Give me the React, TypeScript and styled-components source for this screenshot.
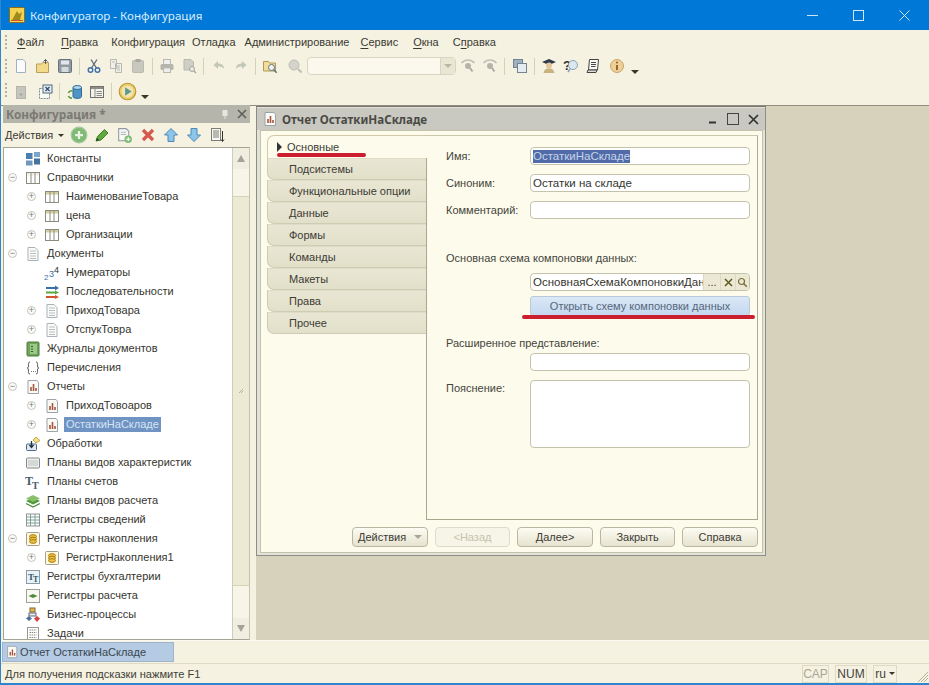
import React from "react";
import styled, { createGlobalStyle } from "styled-components";

const Global = createGlobalStyle`
  html, body { margin: 0; padding: 0; background: #f5f2e2; }
  body { font-family: "Liberation Sans", "Noto Sans", sans-serif; font-size: 11px; color: #333; overflow: hidden; }
`;

const Frame = styled.div`
  width: 929px; height: 685px; display: flex; flex-direction: column; box-sizing: border-box;
  background: #f5f2e2; border-left: 1px solid #2f86cf; border-bottom: 2px solid #2f86cf; overflow: hidden; position: relative;
`;
const TitleBar = styled.div`
  height: 30px; flex: none; background: #0078d7; margin-left: -1px; display: flex; align-items: center; padding: 0 2px 0 9px; gap: 5px; color: #d8ecfa; font-family: "Noto Sans", sans-serif; font-size: 11.6px;
`;
const TitleText = styled.span`flex: 1;`;
const WinCtl = styled.div`width: 46px; height: 30px; margin-left: -5px; display: flex; align-items: center; justify-content: center;`;
const MenuBar = styled.div`height: 24px; flex: none; display: flex; align-items: center; padding-left: 16px; position: relative;`;
const MenuItem = styled.span<{ $ml: number }>`font-size: 11px; color: #3a3a32; margin-left: ${p => p.$ml}px; u { text-underline-offset: 2px; }`;
const Gripper = styled.i`
  position: absolute; left: 4px; top: 5px; width: 2px; height: 15px;
  background: repeating-linear-gradient(to bottom, #b5b29c 0 2px, transparent 2px 4px);
`;
const ToolRow = styled.div<{ $h: number }>`height: ${p => p.$h}px; flex: none; display: flex; align-items: center; padding-left: 9px; position: relative;`;
const ToolBtn = styled.div<{ $ml?: number }>`width: 22px; height: 22px; flex: none; display: flex; align-items: center; justify-content: center; margin-left: ${p => p.$ml ?? 0}px;`;
const Sep = styled.i`width: 1px; height: 17px; flex: none; background: #d4d1bb; margin: 0 3px;`;
const Combo = styled.div`
  width: 149px; height: 18px; margin-left: 1px; margin-right: 1px; flex: none; box-sizing: border-box; border: 1px solid #d8d5c2; border-radius: 4px; background: #fbf9ee;
  display: flex; justify-content: flex-end; 
`;
const ComboArrow = styled.div`width: 14px; background: #e9e6d3; border-left: 1px solid #d8d5c2; display: flex; align-items: center; justify-content: center;`;
const Tri = styled.i<{ $c?: string }>`width: 0; height: 0; border-left: 4px solid transparent; border-right: 4px solid transparent; border-top: 4px solid ${p => p.$c ?? "#3a3628"};`;
const DropTri = styled(Tri)`margin: 11px 0 0 3px;`;

const Main = styled.div`flex: 1; min-height: 0; display: flex; border-top: 1px solid #8f8d80;`;
const Left = styled.div`width: 249px; flex: none; padding-left: 2px; box-sizing: border-box; display: flex; flex-direction: column; margin-top: -1px;`;
const PanelHead = styled.div`height: 18px; flex: none; background: #b6b5ac; display: flex; align-items: center; padding-left: 3px; font-family: "Noto Sans", sans-serif; font-weight: 700; color: #7a7a72; font-size: 11.8px; position: relative;`;
const PanelTitle = styled.span`flex: 1;`;
const PanelCtl = styled.div`width: 17px; display: flex; justify-content: center; align-items: center;`;
const PanelTools = styled.div`height: 24px; flex: none; display: flex; align-items: center; padding-left: 2px; background: #f5f2e2;`;
const ActionsLabel = styled.span`font-size: 11px; color: #3a3a32; width: 53px;`;
const ActionsTri = styled(Tri)`border-width: 3px 3px 0; margin-right: 3px; flex: none;`;
const PanelBtn = styled.div`width: 23px; height: 22px; flex: none; display: flex; align-items: center; justify-content: center;`;
const TreeWrap = styled.div`flex: 1; min-height: 0; display: flex; background: #fff; border: 1px solid #a5a394; border-right-color: #c5c3b2; box-sizing: border-box; overflow: hidden;`;
const TreeList = styled.div`flex: 1; min-width: 0; overflow: hidden; padding-top: 1px;`;
const Row = styled.div<{ $lvl: number }>`height: 19px; display: flex; align-items: center; position: relative; padding-left: ${p => (p.$lvl ? 40 : 21)}px;`;
const Toggle = styled.span<{ $lvl: number }>`
  position: absolute; left: ${p => (p.$lvl ? 23 : 4)}px; top: 5px; width: 9px; height: 9px; border: 1px solid #c4c4bc; border-radius: 50%; box-sizing: border-box; background: #fbfbf8;
  display: flex; align-items: center; justify-content: center; color: #777; font-size: 9px; line-height: 1;
`;
const IconBox = styled.span`width: 16px; height: 16px; flex: none; display: flex; align-items: center; justify-content: center;`;
const TaskIcon = styled.span`width: 14px; height: 14px; flex: none; display: flex; align-items: center; justify-content: center;`;
const RowText = styled.span<{ $sel?: boolean }>`
  margin-left: ${p => (p.$sel ? 4 : 6)}px; padding: 1px ${p => (p.$sel ? 2 : 0)}px 2px; font-size: 11px; white-space: nowrap; color: ${p => (p.$sel ? "#d5e4f3" : "#35352e")}; background: ${p => (p.$sel ? "#6f93c3" : "transparent")};
`;
const Scroll = styled.div`width: 16px; flex: none; display: flex; flex-direction: column; background: #f7f5e8; border-left: 1px solid #cfccb8;`;
const ScrollBtn = styled.div`height: 21px; flex: none; display: flex; align-items: center; justify-content: center; background: #f0eee0;`;
const UpTri = styled.i`width: 0; height: 0; border-left: 4px solid transparent; border-right: 4px solid transparent; border-bottom: 7px solid #a4a396;`;
const DownTri = styled.i`width: 0; height: 0; border-left: 4px solid transparent; border-right: 4px solid transparent; border-top: 7px solid #a4a396;`;
const ScrollTrack = styled.div<{ $h: number }>`height: ${p => p.$h}px; flex: none;`;
const Thumb = styled.div`flex: 1; background: #ecead2; border-top: 1px solid #d5d3bc; border-bottom: 1px solid #d5d3bc; display: flex; align-items: center; justify-content: center;`;
const Splitter = styled.div`width: 6px; flex: none; background: #f5f2e2;`;

const Desk = styled.div`flex: 1; background: #d6d2bc; min-width: 0;`;
const Win = styled.div`
  width: 510px; height: 450px; box-sizing: border-box; background: #e3e2d7; border: 1px solid #8d8c86; border-top-color: #77766e; padding: 1px 2px 2px 3px; display: flex; flex-direction: column;
`;
const WinHead = styled.div`height: 22px; flex: none; background: #c9c9c2; margin: 0 -2px 0 -3px; display: flex; align-items: center; padding: 0 2px 0 5px; gap: 4px;`;
const WinTitle = styled.span`flex: 1; font-family: "Noto Sans", sans-serif; font-weight: 700; font-size: 11.6px; color: #4a4a44;`;
const WinBtn = styled.div`width: 20px; margin-left: -4px; display: flex; justify-content: center; align-items: center;`;
const Body = styled.div`flex: 1; min-height: 0; background: #fdfbec; border: 1px solid #c4c2ab; display: flex; flex-direction: column; padding: 4px 4px 0 6px; position: relative;`;
const Top = styled.div`display: flex; height: 385px; flex: none;`;
const Tabs = styled.div`width: 160px; box-sizing: border-box; flex: none; display: flex; flex-direction: column; border-right: 1px solid #aaa78f;`;
const ActiveTab = styled.div`height: 23px; flex: none; box-sizing: border-box; border: 1px solid #d3c9a8; border-right: 0; border-bottom: 0; border-radius: 7px 0 0 0; background: #fdfbec; margin-right: -1px; display: flex; align-items: center; padding: 0 0 0 9px; gap: 5px; font-size: 11px; color: #3c3c36;`;
const ActiveMark = styled.i`width: 0; height: 0; border-top: 5px solid transparent; border-bottom: 5px solid transparent; border-left: 5px solid #333;`;
const Tab = styled.div`height: 22px; flex: none; box-sizing: border-box; border: 1px solid #cfccb4; border-right: 0; border-top-color: #dedbc6; border-radius: 0 0 0 7px; background: linear-gradient(#e9e6d3, #e2dfc9); display: flex; align-items: center; padding-left: 21px; font-size: 11px; color: #3c3c36;`;
const Pane = styled.div`flex: 1; min-width: 0; box-sizing: border-box; border-top: 1px solid #c9c6ae; border-right: 1px solid #ada99a; border-bottom: 1px solid #aaa78f; padding: 0 7px 0 19px;`;
const PaneRow = styled.div<{ $mt: number }>`display: flex; align-items: center; margin-top: ${p => p.$mt}px; min-height: 18px;`;
const AlignRow = styled(PaneRow)`align-items: flex-start;`;
const Label = styled.span`width: 84px; flex: none; font-size: 11px; color: #44443c; white-space: nowrap;`;
const TopLabel = styled(Label)`padding-top: 2px;`;
const Field = styled.div<{ $h?: number }>`flex: 1; min-width: 0; height: ${p => p.$h ?? 18}px; box-sizing: border-box; border: 1px solid #c5c2ab; border-radius: 4px; background: #fff; padding-left: 2px; display: flex; align-items: center; font-size: 11.5px; color: #35352e; overflow: hidden; white-space: nowrap;`;
const Selected = styled.span`background: #516ba8; color: #c7d3ea; line-height: 13px;`;
const FieldText = styled.span`flex: 1; overflow: hidden;`;
const FieldBtn = styled.div<{ $w: number }>`width: ${p => p.$w}px; height: 100%; flex: none; box-sizing: border-box; background: #ebe8d3; border-left: 1px solid #dcdac6; display: flex; align-items: center; justify-content: center; color: #444; font-size: 11px;`;
const Wide = styled.div`margin: 5px 0 0 84px; height: 20px; box-sizing: border-box; border: 1px solid #b9c9dd; border-radius: 3px; background: linear-gradient(#dbe8f6, #c4d8ef); display: flex; align-items: center; justify-content: center; font-size: 11px; color: #55677a;`;
const Bottom = styled.div`display: flex; padding: 7px 0 0 85px; gap: 6.75px;`;
const Btn = styled.div<{ $off?: boolean }>`width: 76px; height: 20px; box-sizing: border-box; border: 1px solid ${p => (p.$off ? "#dedbca" : "#b9b6a2")}; border-radius: 4px; background: ${p => (p.$off ? "#f7f5e7" : "linear-gradient(#fdfcf3, #e6e3cf)")}; display: flex; align-items: center; justify-content: center; font-size: 11px; color: ${p => (p.$off ? "#c6c3ae" : "#3c3c36")};`;
const BtnActions = styled(Btn)`justify-content: space-between; padding: 0 5px;`;
const Underline = styled.i<{ $l: number; $t: number; $w: number }>`position: absolute; left: ${p => p.$l}px; top: ${p => p.$t}px; width: ${p => p.$w}px; height: 4px; border-radius: 2px; background: #cb1f30; z-index: 2;`;

const TaskBar = styled.div`height: 24px; flex: none; border-top: 1px solid #fbfaf2; box-sizing: border-box; padding: 1px 0 0 1px; border-bottom: 1px solid #dedbc6;`;
const Task = styled.div`width: 172px; height: 20px; box-sizing: border-box; background: #b4cbe3; border: 1px solid #a0b4c9; display: flex; align-items: center; padding-left: 2px; gap: 1px; font-size: 11px; color: #3c4650;`;
const Status = styled.div`height: 19px; flex: none; display: flex; align-items: center; padding-left: 4px; font-size: 11.1px; color: #3f3f38; gap: 6px;`;
const StatusText = styled.span`flex: 1;`;
const Ind = styled.div<{ $w: number; $off?: boolean }>`width: ${p => p.$w}px; height: 18px; box-sizing: border-box; border: 1px solid #dcd9c5; display: flex; align-items: center; justify-content: center; gap: 3px; font-size: 12px; color: ${p => (p.$off ? "#a9a795" : "#44443c")};`;
const StatusEnd = styled.div`width: 26px; height: 18px; flex: none; display: flex; align-items: flex-end; justify-content: flex-end;`;
const SmallTri = styled(Tri)`border-width: 3px 3px 0;`;

const S = ({ children, size = 16 }: { children: React.ReactNode; size?: number }) => (
  <svg width={size} height={size} viewBox="0 0 16 16" fill="none">{children}</svg>
);
const doc = <path d="M3 1.5h7l3 3v10H3z" fill="#fbfbf6" stroke="#a9b2bd" />;
const lines = <path d="M5 5h6M5 7.5h6M5 10h6M5 12.5h6" stroke="#b7bec6" />;
const Grid3 = ({ head = "#d6cf9f" }: { head?: string }) => (
  <S><rect x="1.5" y="2.5" width="13" height="11" fill="#fff" stroke="#8b8b80" /><rect x="2" y="3" width="12" height="2.5" fill={head} /><path d="M6 3v10M10 3v10" stroke="#8b8b80" /></S>
);
const DocI = () => <S>{doc}{lines}</S>;
const Report = ({ size = 16 }: { size?: number }) => <S size={size}><path d="M3 1.5h9l1.5 2v11H3z" fill="#fbfbf6" stroke="#9aa2ab" /><path d="M6 12V8M8.5 12V5M11 12V9" stroke="#a8523f" strokeWidth="1.6" /></S>;
const Coins = () => <S><rect x="1.5" y="1.5" width="13" height="13" rx="1" fill="#fff8df" stroke="#a3a08d" /><ellipse cx="8" cy="5.5" rx="3.5" ry="1.8" fill="#f0c23c" stroke="#a47c12" /><ellipse cx="8" cy="8" rx="3.5" ry="1.8" fill="#f0c23c" stroke="#a47c12" /><ellipse cx="8" cy="10.5" rx="3.5" ry="1.8" fill="#f0c23c" stroke="#a47c12" /></S>;

const treeIcons: Record<string, React.ReactNode> = {
  constants: <S><rect x="1" y="2" width="6.5" height="6" fill="#4f7fb0" /><rect x="9" y="1" width="6" height="5" fill="#7ea7cc" /><rect x="1" y="9.5" width="6.5" height="5" fill="#6f97bd" /><rect x="9" y="7.5" width="6" height="6" fill="#46729f" /></S>,
  refs: <Grid3 head="#eeeee6" />,
  ref: <Grid3 />,
  docs: <DocI />,
  numerators: <S><text x="0" y="15" fontSize="8" fill="#3570a8" fontFamily="Liberation Sans">2</text><text x="5" y="12" fontSize="9" fill="#3570a8" fontFamily="Liberation Sans">3</text><text x="10" y="8" fontSize="9" fill="#333" fontFamily="Liberation Sans">4</text></S>,
  seq: <S><path d="M2 4h10" stroke="#3c6ea8" strokeWidth="2" /><path d="M11 1.5 15 4l-4 2.5z" fill="#3c6ea8" /><path d="M2 8.5h10" stroke="#5aa83c" strokeWidth="2" /><path d="M11 6.5 15 8.5l-4 2z" fill="#5aa83c" /><path d="M2 13h10" stroke="#d2552e" strokeWidth="2" /><path d="M11 11 15 13l-4 2z" fill="#d2552e" /></S>,
  journal: <S><rect x="2" y="1" width="12" height="14" rx="1" fill="#6fa45a" stroke="#4c7d3c" /><rect x="5" y="3" width="7" height="10" fill="#9bc788" /><path d="M6 5.5h2M6 8h2M6 10.5h2" stroke="#2f5f22" /></S>,
  enum: <S><path d="M5 2C3 2 3.5 4 3.5 6S2 8 2 8s1.500 0 1.500 2S3 14 5 14M11 2c2 0 1.500 2 1.500 4S14 8 14 8s-1.500 0-1.500 2 .5 4-1.500 4" stroke="#5a5a55" /><path d="M6 11.500h.8M8 11.500h.8M10 11.500h.8" stroke="#5a5a55" /></S>,
  report: <Report />,
  proc: <S><path d="M11 1 15 4.500 11 7 8 4z" fill="#f2dc8a" stroke="#c2a848" /><rect x="1.500" y="8" width="10" height="6.500" rx="1" fill="#dfe8f0" stroke="#4a6a8c" /><path d="M6.500 5v6M4.500 9l2 2.500 2-2.500" stroke="#234" strokeWidth="1.300" /></S>,
  chartTypes: <S><rect x="1.500" y="3" width="13" height="10" rx="1" fill="#eef0ee" stroke="#858a8a" /><path d="M3.500 6h9M3.500 8h9M3.500 10h9" stroke="#8a8f8f" strokeDasharray="1 1" /></S>,
  accounts: <S><text x="0" y="11" fontSize="12" fill="#45606f" fontFamily="Liberation Serif" fontWeight="700">T</text><text x="7" y="15" fontSize="10" fill="#45606f" fontFamily="Liberation Serif" fontWeight="700">T</text></S>,
  calcTypes: <S><path d="M1 8 8 4.500 15 8 8 11.500z" fill="#4e9a3a" /><path d="M1 5.500 8 2l7 3.500L8 9z" fill="#8ac06a" /><path d="M1 10.500 8 14l7-3.500" stroke="#4e8a3a" strokeWidth="1.300" /></S>,
  info: <S><rect x="1.500" y="2" width="13" height="12" fill="#fff" stroke="#8b9493" /><path d="M1.500 5h13M1.500 8h13M1.500 11h13M5.500 2v12M10 2v12" stroke="#7ea09a" /></S>,
  accum: <Coins />,
  buh: <S><rect x="1.500" y="1.500" width="13" height="13" fill="#e8f2f7" stroke="#8b9ba3" /><text x="3" y="11" fontSize="9" fill="#30566e" fontFamily="Liberation Serif" fontWeight="700">T</text><text x="8" y="13" fontSize="8" fill="#30566e" fontFamily="Liberation Serif" fontWeight="700">T</text></S>,
  calc: <S><rect x="1.500" y="1.500" width="13" height="13" fill="#f8f8f3" stroke="#a0a096" /><path d="M3.500 8 8 6 12.500 8 8 10z" fill="#4e8a3a" /></S>,
  bp: <S><rect x="5" y="1" width="5" height="4" fill="#e6b64c" stroke="#7d6a30" /><rect x="4" y="6" width="7" height="3" fill="#e8ecef" stroke="#667" /><path d="M1 11.500 4 9l3 2.500L4 14z" fill="#4d6fa0" /><path d="M9 11.500 12 9l3 2.500L12 15z" fill="#d64040" /></S>,
  task: <S><rect x="2.500" y="1.500" width="11" height="13" fill="#fff" stroke="#9a9a90" /><path d="M4.500 4h7M4.500 6.500h7M4.500 9h7M4.500 11.500h7" stroke="#8a8a80" strokeDasharray="1.500 .7" /></S>,
};

const tree: [string, number, string, string?][] = [
  ["Константы", 0, "constants"],
  ["Справочники", 0, "refs", "-"],
  ["НаименованиеТовара", 1, "ref", "+"],
  ["цена", 1, "ref", "+"],
  ["Организации", 1, "ref", "+"],
  ["Документы", 0, "docs", "-"],
  ["Нумераторы", 1, "numerators"],
  ["Последовательности", 1, "seq"],
  ["ПриходТовара", 1, "docs", "+"],
  ["ОтспукТовра", 1, "docs", "+"],
  ["Журналы документов", 0, "journal"],
  ["Перечисления", 0, "enum"],
  ["Отчеты", 0, "report", "-"],
  ["ПриходТовоаров", 1, "report", "+"],
  ["ОстаткиНаСкладе", 1, "report", "+"],
  ["Обработки", 0, "proc"],
  ["Планы видов характеристик", 0, "chartTypes"],
  ["Планы счетов", 0, "accounts"],
  ["Планы видов расчета", 0, "calcTypes"],
  ["Регистры сведений", 0, "info"],
  ["Регистры накопления", 0, "accum", "-"],
  ["РегистрНакопления1", 1, "accum", "+"],
  ["Регистры бухгалтерии", 0, "buh"],
  ["Регистры расчета", 0, "calc"],
  ["Бизнес-процессы", 0, "bp"],
  ["Задачи", 0, "task"],
];

const gray = "#b9b9b0";
const I = {
  newDoc: <S><path d="M3.500 1.500h6.500l2.500 2.500v10.500h-9z" fill="#fbfbfb" stroke="#9fb2c4" /></S>,
  open: <S><path d="M1.500 6h5l1-1.500h6v10h-12z" fill="#f3d98a" stroke="#b6a05c" /><path d="M10.500 6V1.500M8.500 3.500l2-2 2 2" stroke="#4d5a63" /></S>,
  save: <S><rect x="1.500" y="1.500" width="13" height="13" rx="1" fill="#8f9aa3" stroke="#69747c" /><rect x="4" y="2.500" width="8" height="4" fill="#e4e7ea" /><rect x="4.500" y="9" width="7" height="5" fill="#d6dadd" /></S>,
  cut: <S><path d="M5 1.500 10.500 10M11 1.500 5.500 10" stroke="#5e6a74" strokeWidth="1.300" /><circle cx="4.500" cy="12" r="2.300" stroke="#3f6ea8" strokeWidth="1.400" /><circle cx="11.500" cy="12" r="2.300" stroke="#3f6ea8" strokeWidth="1.400" /></S>,
  copy: <S><path d="M2.500 1.500h6v9h-6zM7.500 5.500h6v9h-6z" fill="#f1f1ec" stroke={gray} /><path d="M4 4h3M9 8h3M9 10h3M9 12h3" stroke={gray} /></S>,
  paste: <S><rect x="2.500" y="2.500" width="11" height="12" rx="1" fill="#c9c8bf" stroke={gray} /><rect x="5.500" y="1" width="5" height="3" fill="#aaa99f" /></S>,
  print: <S><rect x="4.500" y="1.500" width="7" height="5" fill="#eee" stroke={gray} /><rect x="1.500" y="6" width="13" height="6" rx="1.500" fill="#b5b5ac" /><rect x="4.500" y="10" width="7" height="4.500" fill="#eee" stroke={gray} /></S>,
  preview: <S><path d="M3 1.500h7l2.500 2.500v8H3z" fill="#cfcfc6" stroke={gray} /><circle cx="11" cy="11" r="2.500" fill="#e8e8e0" stroke="#a5a59b" /><path d="M13 13l2 2" stroke="#a5a59b" strokeWidth="1.500" /></S>,
  undo: <S><path d="M2.500 7 7 3v2.500c3.500 0 6 1.500 6 5.500-1.500-2-3-2.500-6-2.500V11z" fill="#c3c7b8" /></S>,
  redo: <S><path d="M13.500 7 9 3v2.500C5.500 5.500 3 7 3 11c1.500-2 3-2.500 6-2.500V11z" fill="#c3c7b8" /></S>,
  findFolder: <S><path d="M1.500 3.500h5l1 1.500h6v8h-12z" fill="#f3dc98" stroke="#ab9a5c" /><circle cx="9.500" cy="9.500" r="3" fill="#eef3f6" stroke="#66727c" /><path d="M11.700 11.700l3 3" stroke="#66727c" strokeWidth="1.500" /></S>,
  search: <S><circle cx="7" cy="7" r="5" fill="#d4d4cc" stroke="#bdbdb3" /><path d="M11 11l3.500 3.500" stroke="#bdbdb3" strokeWidth="2" /></S>,
  navA: <S><path d="M1.500 5C5 1 11 1 14.500 5" stroke="#c0c0b6" strokeWidth="1.500" /><circle cx="8" cy="8" r="3" fill="#b4b4aa" /><path d="M10 10l2.500 3.500" stroke="#a8a89e" strokeWidth="1.800" /></S>,
  windows: <S><rect x="1.500" y="1.500" width="9" height="8" fill="#9fb0c0" stroke="#73848f" /><rect x="5.500" y="5.500" width="9" height="9" fill="#e5ebf1" stroke="#73848f" /></S>,
  student: <S><path d="M8 1 15 4 8 7 1 4z" fill="#2a3a4a" /><circle cx="8" cy="7.500" r="3" fill="#e8c49a" /><path d="M2.500 15c1-4 3-4.500 5.500-4.500s4.500.5 5.500 4.500z" fill="#c9b27c" /></S>,
  help: <S><text x="0" y="12" fontSize="13" fontWeight="700" fill="#333" fontFamily="Liberation Sans">?</text><circle cx="10" cy="7" r="4.500" fill="#dbe8f0" stroke="#8aa0b0" /><path d="M7 11l-2 3" stroke="#8aa0b0" strokeWidth="1.500" /></S>,
  book: <S><path d="M4.500 1.500h9l-1 10.500h-9z" fill="#fafaf5" stroke="#444" /><path d="M2 14.500h9l1-2.500H3z" fill="#ddd" stroke="#444" /><path d="M6 4.500h5M6 6.500h5M6 8.500h4.500" stroke="#444" /></S>,
  info: <S><circle cx="8" cy="8" r="6.500" fill="#eecf9a" stroke="#c9a566" /><circle cx="8" cy="4.500" r="1" fill="#8a5c20" /><path d="M8 7v5" stroke="#8a5c20" strokeWidth="1.800" /></S>,
  gridDoc: <S><rect x="3.500" y="2.500" width="9" height="12" fill="#c5c5bc" stroke="#b5b5ac" /><path d="M8 9v3M6.500 10.500h3" stroke="#a5a59c" /></S>,
  xDoc: <S><path d="M2.500 4.500h10v10h-10z" fill="#fafaf5" stroke="#7c8a94" strokeDasharray="2 1" /><rect x="6" y="1" width="9" height="8" fill="#e4ecf4" stroke="#53697d" /><path d="M8.500 3l4 4M12.500 3l-4 4" stroke="#2f4c68" strokeWidth="1.300" /></S>,
  db: <S><path d="M6 3.500v9c0 2.500 8.500 2.500 8.500 0v-9" fill="#4f94c6" stroke="#2b6a98" /><ellipse cx="10.250" cy="3.500" rx="4.250" ry="2" fill="#b2d6ec" stroke="#2b6a98" /><path d="M1.500 9a3 3 0 0 1 4-2M5 14a3 3 0 0 1-3.500-2" stroke="#4e9a3a" strokeWidth="1.600" /></S>,
  table: <S><rect x="1.500" y="2.500" width="13" height="11" fill="#f2f2ec" stroke="#70706a" /><rect x="2" y="3" width="12" height="2" fill="#8e8e86" /><path d="M6 5v8M7.500 7.500h5.500M7.500 9.500h5.500M7.500 11.500h5.500" stroke="#8e8e86" /></S>,
  play: <S size={19}><circle cx="8" cy="8" r="7" fill="#eccd6a" stroke="#b79433" strokeWidth=".9" /><circle cx="8" cy="8" r="5" fill="#f4e5b0" /><path d="M6 4.500v7l5.500-3.500z" fill="#5c9a92" /></S>,
  plus: <S size={18}><circle cx="8" cy="8" r="7" fill="#7fbb74" stroke="#a8c9a2" /><path d="M8 4.500v7M4.500 8h7" stroke="#e8f3e3" strokeWidth="2" /></S>,
  pencil: <S><path d="M2 14l1.500-4.500 7-7 3.500 3.500-7 7z" fill="#5da93c" stroke="#3e7d26" /><path d="M2 14l3-1-2-2z" fill="#333" /></S>,
  addDoc: <S size={17}><path d="M2.500 1.500h7l2.500 2.500v9h-9.500z" fill="#f8f8f3" stroke="#8e9aa5" /><path d="M4.500 5h5M4.500 7h5" stroke="#aeb6bd" /><circle cx="11.500" cy="11.500" r="3.500" fill="#7fbb74" /><path d="M11.500 9.500v4M9.500 11.500h4" stroke="#fff" /></S>,
  del: <S><path d="M3 3l10 10M13 3 3 13" stroke="#d8564b" strokeWidth="3.200" /></S>,
  up: <S><path d="M8 1.500 14.500 8H11v6.500H5V8H1.500z" fill="#8cc4ea" stroke="#4f88b4" /></S>,
  down: <S><path d="M8 14.500 14.500 8H11V1.500H5V8H1.500z" fill="#8cc4ea" stroke="#4f88b4" /></S>,
  list: <S><rect x="2.500" y="1.500" width="9" height="12" fill="#f8f8f3" stroke="#7c7c74" /><path d="M4 4h6M4 6h6M4 8h6M4 10h6" stroke="#7c7c74" /><path d="M13.500 4v10M12 12.500l1.500 2 1.500-2" stroke="#333" /></S>,
};

const Menu = ["Файл|Ф", "Правка|П", "Конфигурация", "Отладка", "Администрирование", "Сервис|С", "Окна|О", "Справка|п"];
const menuGaps = [0, 17, 13, 7, 9, 11, 15, 14];

const MenuLabel = ({ v }: { v: string }) => {
  const [t, u] = v.split("|");
  if (!u) return <>{t}</>;
  const i = t.indexOf(u);
  return <>{t.slice(0, i)}<u>{u}</u>{t.slice(i + 1)}</>;
};

const TB = ({ children, ml }: { children: React.ReactNode; ml?: number }) => <ToolBtn $ml={ml}>{children}</ToolBtn>;

export default function App() {
  return (
    <Frame>
      <Global />
      <TitleBar>
        <svg width="16" height="16" viewBox="0 0 16 16"><rect x=".5" y=".5" width="15" height="15" rx="1" fill="#f2d24f" stroke="#8a6f16" /><path d="M3 13l5-9 2 3 3-2-2 8z" fill="#a08a20" /><path d="M2 13h12v1H2z" fill="#c53" /></svg>
        <TitleText>Конфигуратор - Конфигурация</TitleText>
        <WinCtl><svg width="11" height="11"><path d="M0 5.500h11" stroke="#cfe6f8" /></svg></WinCtl>
        <WinCtl><svg width="11" height="11"><rect x=".5" y=".5" width="10" height="10" fill="none" stroke="#cfe6f8" /></svg></WinCtl>
        <WinCtl><svg width="11" height="11"><path d="M.5.500l10 10M10.500.500l-10 10" stroke="#cfe6f8" /></svg></WinCtl>
      </TitleBar>
      <MenuBar>
        <Gripper />
        {Menu.map((m, i) => <MenuItem key={m} $ml={menuGaps[i]}><MenuLabel v={m} /></MenuItem>)}
      </MenuBar>
      <ToolRow $h={24}>
        <Gripper />
        <TB>{I.newDoc}</TB><TB>{I.open}</TB><TB>{I.save}</TB><Sep />
        <TB>{I.cut}</TB><TB>{I.copy}</TB><TB>{I.paste}</TB><Sep />
        <TB>{I.print}</TB><TB>{I.preview}</TB><Sep />
        <TB ml={1}>{I.undo}</TB><TB>{I.redo}</TB><Sep />
        <TB>{I.findFolder}</TB><TB ml={3}>{I.search}</TB>
        <Combo><ComboArrow><Tri $c="#b9b7a6" /></ComboArrow></Combo>
        <TB>{I.navA}</TB><TB>{I.navA}</TB><Sep />
        <TB ml={1}>{I.windows}</TB><Sep />
        <TB>{I.student}</TB><TB>{I.help}</TB><TB>{I.book}</TB><TB ml={2}>{I.info}</TB>
        <DropTri />
      </ToolRow>
      <ToolRow $h={27}>
        <Gripper />
        <TB>{I.gridDoc}</TB><TB ml={2}>{I.xDoc}</TB><Sep />
        <TB ml={1}>{I.db}</TB><TB>{I.table}</TB><Sep />
        <TB ml={1}>{I.play}</TB>
        <DropTri />
      </ToolRow>
      <Main>
        <Left>
          <PanelHead>
            <PanelTitle>Конфигурация *</PanelTitle>
            <PanelCtl><svg width="8" height="10"><rect x="1.500" y="1" width="5" height="6" fill="#e6e6e0" /><path d="M4 7v3" stroke="#e6e6e0" /></svg></PanelCtl>
            <PanelCtl><svg width="10" height="10"><path d="M1 1l8 8M9 1l-8 8" stroke="#5f5f58" strokeWidth="1.600" /></svg></PanelCtl>
          </PanelHead>
          <PanelTools>
            <ActionsLabel>Действия</ActionsLabel><ActionsTri />
            <PanelBtn>{I.plus}</PanelBtn><PanelBtn>{I.pencil}</PanelBtn><PanelBtn>{I.addDoc}</PanelBtn><PanelBtn>{I.del}</PanelBtn><PanelBtn>{I.up}</PanelBtn><PanelBtn>{I.down}</PanelBtn><PanelBtn>{I.list}</PanelBtn>
          </PanelTools>
          <TreeWrap>
            <TreeList>
              {tree.map(([t, lvl, ic, tg]) => (
                <Row key={t} $lvl={lvl}>
                  {tg && <Toggle $lvl={lvl}>{tg === "+" ? "+" : "−"}</Toggle>}
                  <IconBox>{treeIcons[ic]}</IconBox>
                  <RowText $sel={t === "ОстаткиНаСкладе"}>{t}</RowText>
                </Row>
              ))}
            </TreeList>
            <Scroll>
              <ScrollBtn><UpTri /></ScrollBtn>
              <ScrollTrack $h={27} />
              <Thumb><svg width="6" height="6"><path d="M1 5l4-4M3 5l2-2" stroke="#b7b5a2" /></svg></Thumb>
              <ScrollTrack $h={32} />
              <ScrollBtn><DownTri /></ScrollBtn>
            </Scroll>
          </TreeWrap>
        </Left>
        <Splitter />
        <Desk>
          <Win>
            <WinHead>
              <IconBox><Report /></IconBox>
              <WinTitle>Отчет ОстаткиНаСкладе</WinTitle>
              <WinBtn><svg width="10" height="10"><path d="M1 8.500h7" stroke="#333" strokeWidth="2" /></svg></WinBtn>
              <WinBtn><svg width="12" height="12"><rect x=".5" y=".5" width="11" height="11" fill="none" stroke="#444" /></svg></WinBtn>
              <WinBtn><svg width="11" height="11"><path d="M1 1l9 9M10 1l-9 9" stroke="#333" strokeWidth="1.700" /></svg></WinBtn>
            </WinHead>
            <Body>
              <Underline $l={16} $t={22} $w={89} />
              <Underline $l={261} $t={184} $w={233} />
              <Top>
                <Tabs>
                  <ActiveTab><ActiveMark />Основные</ActiveTab>
                  {["Подсистемы", "Функциональные опции", "Данные", "Формы", "Команды", "Макеты", "Права", "Прочее"].map(t => <Tab key={t}>{t}</Tab>)}
                </Tabs>
                <Pane>
                  <PaneRow $mt={11}><Label>Имя:</Label><Field><Selected>ОстаткиНаСкладе</Selected></Field></PaneRow>
                  <PaneRow $mt={9}><Label>Синоним:</Label><Field>Остатки на складе</Field></PaneRow>
                  <PaneRow $mt={9}><Label>Комментарий:</Label><Field /></PaneRow>
                  <PaneRow $mt={30}><Label>Основная схема компоновки данных:</Label></PaneRow>
                  <PaneRow $mt={6}><Label />
                    <Field><FieldText>ОсновнаяСхемаКомпоновкиДанн</FieldText><FieldBtn $w={17}>...</FieldBtn><FieldBtn $w={15}><svg width="9" height="9"><path d="M1 1l7 7M8 1l-7 7" stroke="#5a5a20" strokeWidth="1.500" /></svg></FieldBtn><FieldBtn $w={14}><svg width="11" height="11"><circle cx="4.500" cy="4.500" r="3" fill="none" stroke="#7a6f3a" strokeWidth="1.200" /><path d="M6.800 6.800l3 3" stroke="#7a6f3a" strokeWidth="1.500" /></svg></FieldBtn></Field>
                  </PaneRow>
                  <Wide>Открыть схему компоновки данных</Wide>
                  <PaneRow $mt={18}><Label>Расширенное представление:</Label></PaneRow>
                  <PaneRow $mt={1}><Label /><Field /></PaneRow>
                  <AlignRow $mt={9}><TopLabel>Пояснение:</TopLabel><Field $h={68} /></AlignRow>
                </Pane>
              </Top>
              <Bottom>
                <BtnActions>Действия <Tri $c="#a8a696" /></BtnActions>
                <Btn $off>&lt;Назад</Btn>
                <Btn>Далее&gt;</Btn>
                <Btn>Закрыть</Btn>
                <Btn>Справка</Btn>
              </Bottom>
            </Body>
          </Win>
        </Desk>
      </Main>
      <TaskBar><Task><TaskIcon><Report size={14} /></TaskIcon>Отчет ОстаткиНаСкладе</Task></TaskBar>
      <Status>
        <StatusText>Для получения подсказки нажмите F1</StatusText>
        <Ind $w={27} $off>CAP</Ind>
        <Ind $w={32}>NUM</Ind>
        <Ind $w={24}>ru<SmallTri /></Ind>
        <StatusEnd><svg width="12" height="12"><path d="M11 1 1 11M11 4 4 11M11 7 7 11" stroke="#b5b39e" /></svg></StatusEnd>
      </Status>
    </Frame>
  );
}
